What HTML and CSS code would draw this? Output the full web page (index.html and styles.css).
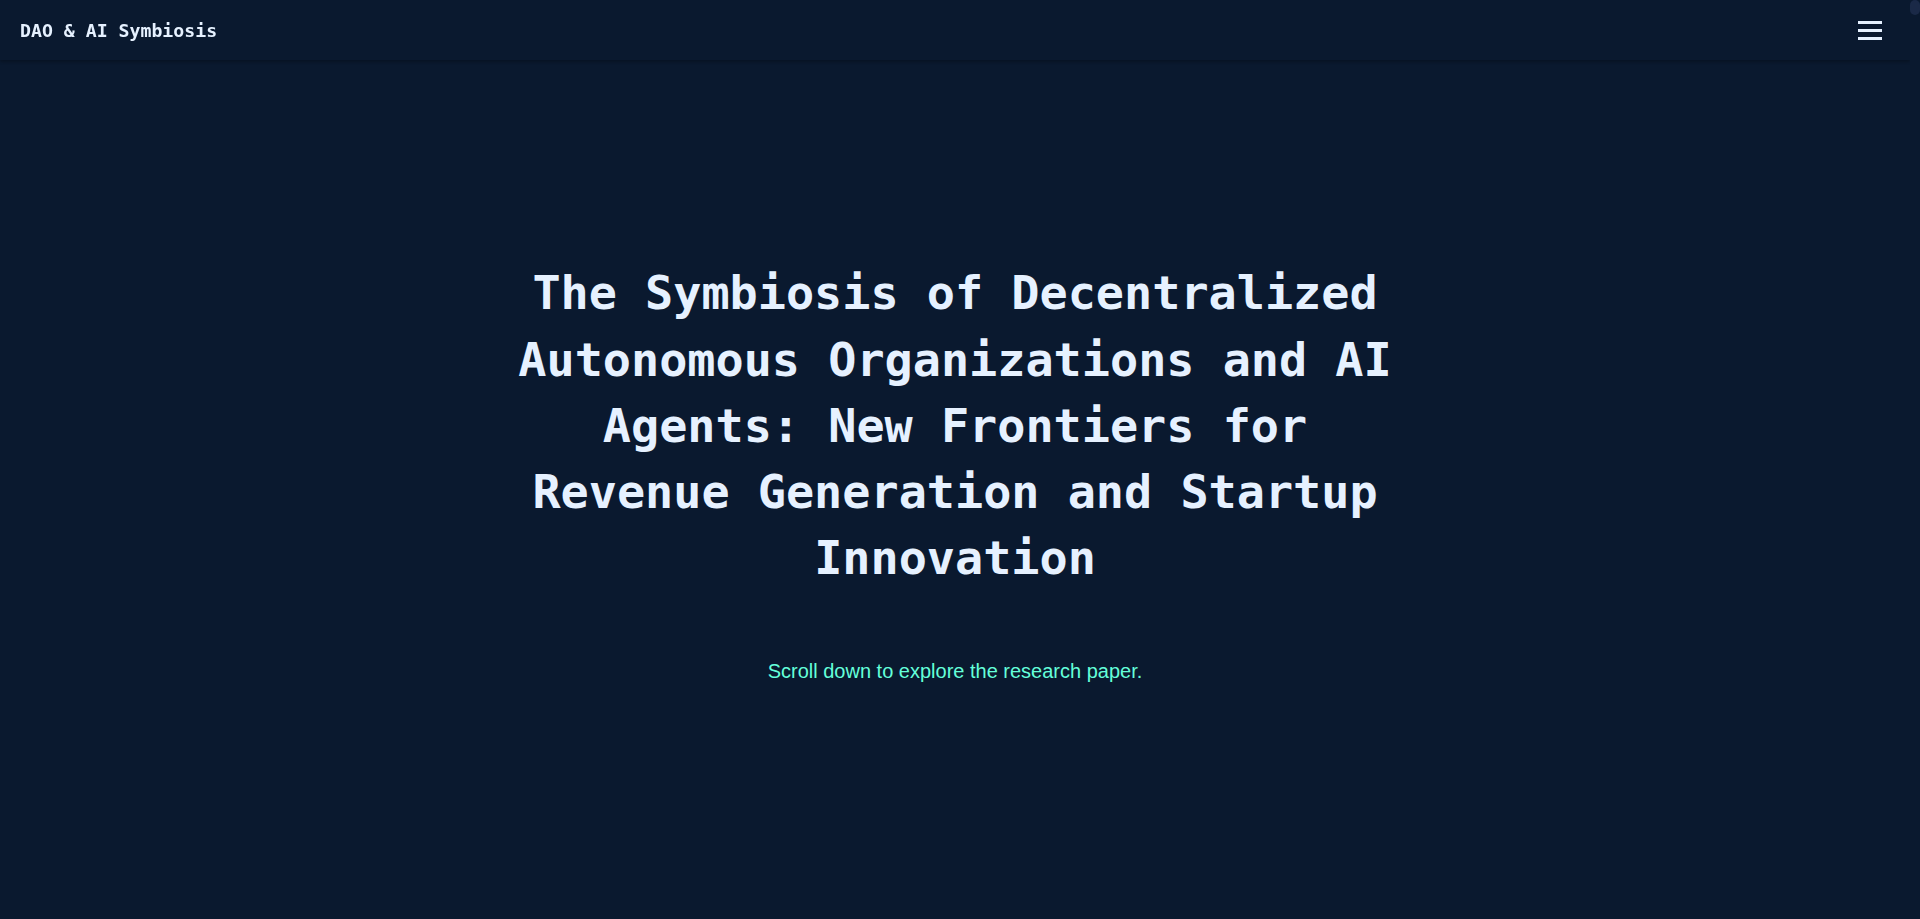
FILE: index.html
```html
<!DOCTYPE html>
<html lang="en">
<head>
<meta charset="utf-8">
<title>DAO &amp; AI Symbiosis</title>
<link rel="stylesheet" href="styles.css">
</head>
<body>
<header class="site-header">
  <div class="brand">DAO &amp; AI Symbiosis</div>
  <button class="menu-btn" aria-label="Open menu">
    <svg width="24" height="19" viewBox="0 0 24 19" aria-hidden="true">
      <rect x="0" y="0" width="24" height="3" fill="#e6f1ff"/>
      <rect x="0" y="8" width="24" height="3" fill="#e6f1ff"/>
      <rect x="0" y="16" width="24" height="3" fill="#e6f1ff"/>
    </svg>
  </button>
</header>
<main class="page">
  <section class="hero">
    <div class="hero-inner">
      <h1 class="hero-title">The Symbiosis of Decentralized Autonomous Organizations and AI Agents: New Frontiers for Revenue Generation and Startup Innovation</h1>
      <p class="hero-sub">Scroll down to explore the research paper.</p>
    </div>
  </section>
</main>
<div class="scroll-rail" aria-hidden="true"><div class="scroll-thumb"></div></div>
</body>
</html>
```

FILE: styles.css
```css
html {
  background: #0a192f;
}
body {
  margin: 0;
  padding-right: 10px;
  background: #0a192f;
  color: #e6f1ff;
  font-family: "Liberation Sans", Arial, sans-serif;
}
.site-header {
  position: fixed;
  top: 0;
  left: 0;
  right: 10px;
  height: 60px;
  box-sizing: border-box;
  padding: 0 20px;
  display: flex;
  align-items: center;
  justify-content: space-between;
  background: #0a192f;
  box-shadow: 0 2px 3px rgba(0, 0, 0, 0.25);
  z-index: 10;
}
.brand {
  font-family: "DejaVu Sans Mono", monospace;
  font-weight: bold;
  font-size: 18.2px;
  color: #e6f1ff;
}
.menu-btn {
  background: none;
  border: 0;
  padding: 8px;
  margin: 0;
  display: flex;
  cursor: pointer;
}
.menu-btn svg {
  display: block;
}
.hero {
  min-height: 100vh;
  box-sizing: border-box;
  padding: 24px 20px 0;
  display: flex;
  align-items: center;
  justify-content: center;
  text-align: center;
}
.hero-inner {
  max-width: 900px;
}
.hero-title {
  margin: 0 0 68px;
  font-family: "DejaVu Sans Mono", monospace;
  font-weight: bold;
  font-size: 46.8px;
  line-height: 66.25px;
  color: #e6f1ff;
}
.hero-sub {
  margin: 0;
  font-size: 20px;
  color: #64ffda;
}
.scroll-rail {
  position: fixed;
  top: 0;
  right: 0;
  width: 10px;
  height: 100vh;
  background: #0a192f;
  z-index: 20;
}
.scroll-thumb {
  width: 10px;
  height: 15px;
  border-radius: 5px;
  background: #1a2947;
}
```
